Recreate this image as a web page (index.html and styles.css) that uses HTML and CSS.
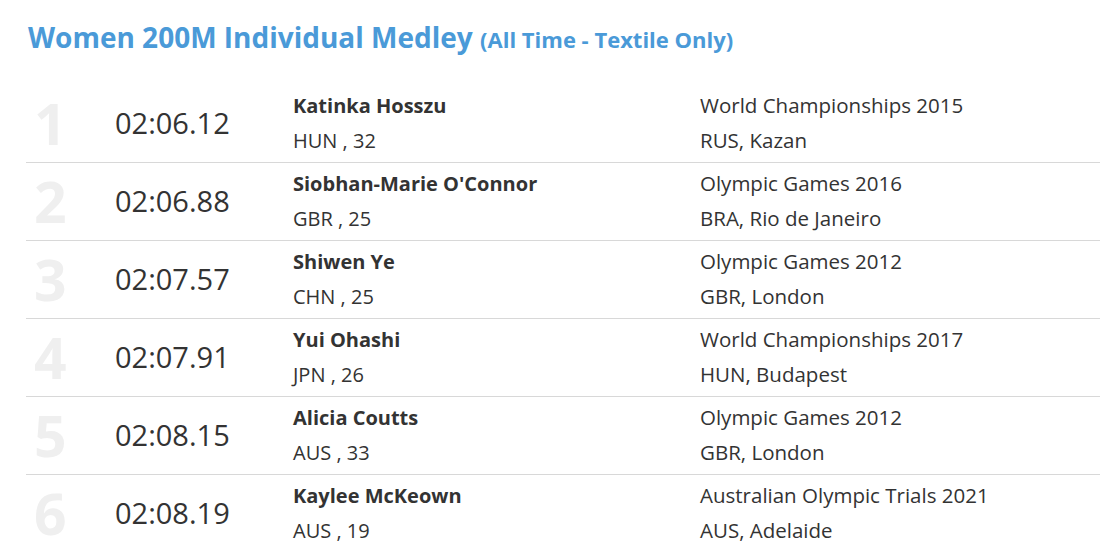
FILE: index.html
```html
<!DOCTYPE html>
<html>
<head>
<meta charset="utf-8">
<link rel="stylesheet" href="styles.css">
</head>
<body>
<div class="page">
  <h1 class="title">Women 200M Individual Medley <span class="sub">(All Time - Textile Only)</span></h1>
  <div class="list">
    <div class="row">
      <div class="rank">1</div>
      <div class="time">02:06.12</div>
      <div class="athlete"><div class="name">Katinka Hosszu</div><div class="meta">HUN , 32</div></div>
      <div class="event"><div>World Championships 2015</div><div>RUS, Kazan</div></div>
    </div>
    <div class="row">
      <div class="rank">2</div>
      <div class="time">02:06.88</div>
      <div class="athlete"><div class="name">Siobhan-Marie O'Connor</div><div class="meta">GBR , 25</div></div>
      <div class="event"><div>Olympic Games 2016</div><div>BRA, Rio de Janeiro</div></div>
    </div>
    <div class="row">
      <div class="rank">3</div>
      <div class="time">02:07.57</div>
      <div class="athlete"><div class="name">Shiwen Ye</div><div class="meta">CHN , 25</div></div>
      <div class="event"><div>Olympic Games 2012</div><div>GBR, London</div></div>
    </div>
    <div class="row">
      <div class="rank">4</div>
      <div class="time">02:07.91</div>
      <div class="athlete"><div class="name">Yui Ohashi</div><div class="meta">JPN , 26</div></div>
      <div class="event"><div>World Championships 2017</div><div>HUN, Budapest</div></div>
    </div>
    <div class="row">
      <div class="rank">5</div>
      <div class="time">02:08.15</div>
      <div class="athlete"><div class="name">Alicia Coutts</div><div class="meta">AUS , 33</div></div>
      <div class="event"><div>Olympic Games 2012</div><div>GBR, London</div></div>
    </div>
    <div class="row">
      <div class="rank">6</div>
      <div class="time">02:08.19</div>
      <div class="athlete"><div class="name">Kaylee McKeown</div><div class="meta">AUS , 19</div></div>
      <div class="event"><div>Australian Olympic Trials 2021</div><div>AUS, Adelaide</div></div>
    </div>
  </div>
</div>
</body>
</html>
```
FILE: styles.css
```css
html, body {
  margin: 0;
  padding: 0;
  background: #fff;
}
body {
  font-family: "Open Sans", "Liberation Sans", sans-serif;
  color: #333;
}
.page {
  padding: 20px 0 0 26px;
}
.title {
  margin: 0 0 29px 2px;
  font-size: 28px;
  line-height: 34px;
  font-weight: 700;
  color: #4a9ad8;
}
.sub {
  font-size: 22px;
}
.row {
  display: grid;
  grid-template-columns: 89px 178px 407px 1fr;
  padding: 3px 0 4px;
  border-bottom: 1px solid #d8d8d8;
}
.row:last-child {
  border-bottom: none;
}
.rank {
  align-self: center;
  padding-left: 8px;
  font-size: 57px;
  line-height: 60px;
  font-weight: 700;
  color: #efefef;
}
.time {
  align-self: center;
  font-size: 29px;
  line-height: 40px;
  color: #333;
}
.athlete, .event {
  font-size: 20px;
  line-height: 35px;
}
.name {
  font-weight: 700;
}
.event {
  font-size: 20.5px;
}
```
